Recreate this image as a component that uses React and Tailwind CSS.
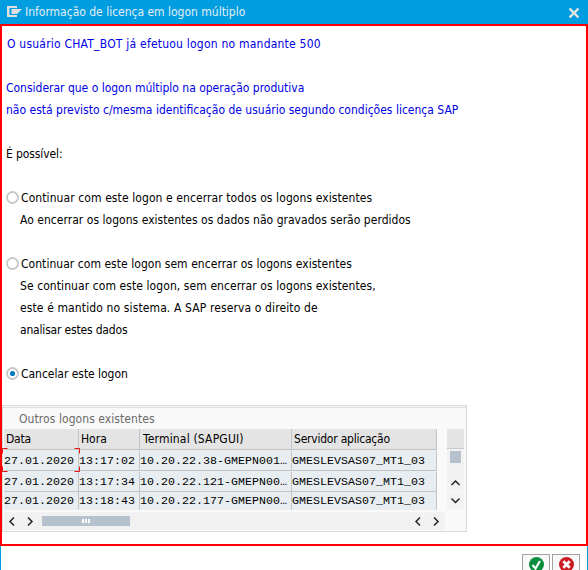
import React from "react";

const UI = "font-['DejaVu_Sans_Condensed','DejaVu_Sans',sans-serif] [font-stretch:condensed]";

const rows = [
  { data: "27.01.2020", hora: "13:17:02", terminal: "10.20.22.38-GMEPN001", servidor: "GMESLEVSAS07_MT1_03" },
  { data: "27.01.2020", hora: "13:17:34", terminal: "10.20.22.121-GMEPN00", servidor: "GMESLEVSAS07_MT1_03" },
  { data: "27.01.2020", hora: "13:18:43", terminal: "10.20.22.177-GMEPN00", servidor: "GMESLEVSAS07_MT1_03" },
];

function Line({ children, className = "" }) {
  return (
    <div className="flex h-[22px] items-center">
      <span className={className}>{children}</span>
    </div>
  );
}

function Radio({ label, checked, className = "" }) {
  return (
    <label className="flex h-[22px] items-center pl-1">
      <svg className="mr-[2px] mb-[2px] h-[13px] w-[13px] shrink-0" viewBox="0 0 13 13">
        <circle cx="6.5" cy="6.5" r="5.5" fill="#fff" stroke="#c8c8c8" strokeWidth="1.9" />
        {checked && <circle cx="6.5" cy="6.5" r="2.6" fill="#007cc0" />}
      </svg>
      <span className={className}>{label}</span>
    </label>
  );
}

const arrows = {
  left: "M7 1.5 3 5.5l4 4",
  right: "M3 1.5l4 4-4 4",
  up: "M1.5 8l4-4 4 4",
  down: "M1.5 3.5l4 4 4-4",
};

function ArrowButton({ dir }) {
  return (
    <div className="flex h-[17px] w-[17px] shrink-0 items-center justify-center bg-[#f2f2f2]">
      <svg className="h-[11px] w-[11px]" viewBox="0 0 11 11" fill="none" stroke="#222" strokeWidth="1.5">
        <path d={arrows[dir]} />
      </svg>
    </div>
  );
}

function Cell({ children, className = "" }) {
  return (
    <div className={"flex shrink-0 items-center overflow-hidden border-r border-[#c4c4c4] whitespace-pre " + className}>
      {children}
    </div>
  );
}

function LogonTable() {
  return (
    <div className="relative w-[433px] shrink-0">
      <div className="flex h-[21px] border-b border-[#c4c4c4] bg-[#e4e4e4]">
        <Cell className="w-[75px] pl-[2px] tracking-[-0.2px]">Data</Cell>
        <Cell className="w-[61px] pl-[2px]">Hora</Cell>
        <Cell className="w-[152px] pl-[3px] tracking-[0.18px]">Terminal (SAPGUI)</Cell>
        <Cell className="w-[145px] pl-[2px] tracking-[-0.22px]">Servidor aplicação</Cell>
      </div>
      <div className="h-[60px] overflow-hidden bg-[#e8edf1] font-['Liberation_Mono',monospace] text-[11.6px] tracking-[0.04px]">
        {rows.map((r) => (
          <div key={r.hora} className="flex h-[21px] border-b border-[#c4c4c4] pt-px last:h-[18px] last:border-b-0 last:pt-0">
            <Cell className="w-[75px]">{r.data}</Cell>
            <Cell className="w-[61px]">{r.hora}</Cell>
            <Cell className="w-[152px]">{r.terminal}…</Cell>
            <Cell className="w-[145px]">{r.servidor}</Cell>
          </div>
        ))}
      </div>
      <svg className="absolute top-[19px] left-[-2px] h-6 w-[78px]" viewBox="0 0 78 24" fill="none" stroke="#e01018">
        <path d="M.5 5.5v-5h5M72.5.5h5v5M.5 18.5v5h5M72.5 23.5h5v-5" />
      </svg>
    </div>
  );
}

export default function App() {
  return (
    <div className={"flex h-[570px] w-[588px] flex-col overflow-hidden bg-white text-[12px] leading-[16px] whitespace-nowrap text-black " + UI}>
      <header className="flex h-6 shrink-0 items-center bg-[#009de0] text-[#e2eef4]">
        <svg className="ml-[7px] h-[12px] w-[15px]" viewBox="0 0 15 12" fill="#e0e0e0">
          <path d="M0 0h10v2H2.500v7H10v2H0z" />
          <path d="M4.500 3H15l-3.500 3.500L10 8H4.500z" />
        </svg>
        <span className="ml-[3px] tracking-[-0.01px]">Informação de licença em logon múltiplo</span>
        <svg className="mt-[2px] mr-[9px] ml-auto h-[10px] w-[10px]" viewBox="0 0 10 10" stroke="#e2e2e2" strokeWidth="2.4">
          <path d="M.5.5l9 9M9.5.5l-9 9" />
        </svg>
      </header>

      <main className="h-[522px] shrink-0 border-2 border-[#ff0000] pt-[7px]">
        <div className="pl-1 text-[#0000e6]">
          <Line className="pl-px tracking-[0.22px]">O usuário CHAT_BOT já efetuou logon no mandante 500</Line>
          <Line />
          <Line className="tracking-[-0.01px]">Considerar que o logon múltiplo na operação produtiva</Line>
          <Line>não está previsto c/mesma identificação de usuário segundo condições licença SAP</Line>
        </div>
        <div className="pt-[22px] pl-1">
          <Line className="tracking-[-0.1px]">É possível:</Line>
        </div>
        <div className="pt-[22px]">
          <Radio className="tracking-[0.09px]" label="Continuar com este logon e encerrar todos os logons existentes" />
          <div className="pl-[18px]">
            <Line className="tracking-[0.03px]">Ao encerrar os logons existentes os dados não gravados serão perdidos</Line>
          </div>
        </div>
        <div className="pt-[22px]">
          <Radio className="tracking-[0.04px]" label="Continuar com este logon sem encerrar os logons existentes" />
          <div className="pl-[18px]">
            <Line className="tracking-[0.08px]">Se continuar com este logon, sem encerrar os logons existentes,</Line>
            <Line className="tracking-[0.12px]">este é mantido no sistema. A SAP reserva o direito de</Line>
            <Line className="tracking-[-0.18px]">analisar estes dados</Line>
          </div>
        </div>
        <div className="pt-[22px]">
          <Radio className="tracking-[-0.04px]" checked label="Cancelar este logon" />
        </div>

        <section className="mt-5 h-[127px] w-[465px] border border-[#d9d9d9] bg-[#f9f9f9]">
          <div className="mt-px flex h-[22px] items-center border-t border-[#dedede] pl-4 tracking-[0.07px] text-[#6a6a6a]">
            Outros logons existentes
          </div>
          <div className="flex h-[81px] pl-px">
            <LogonTable />
            <div className="ml-[10px] flex w-[17px] flex-col">
              <div className="h-5 border-b border-[#c8c8c8] bg-[#e4e4e4]" />
              <div className="h-[25px] bg-[#f2f2f2] pt-[2px] pl-[3px]">
                <div className="h-3 w-[11px] bg-[#b5c1cc]" />
              </div>
              <ArrowButton dir="up" />
              <div className="h-px" />
              <ArrowButton dir="down" />
            </div>
          </div>
          <div className="mt-[2px] ml-px flex h-[18px] w-[441px] items-center gap-px bg-[#f1f1f1]">
            <ArrowButton dir="left" />
            <ArrowButton dir="right" />
            <div className="ml-[2px] flex h-[10px] w-[88px] items-center justify-center gap-px bg-[#b5c1cc]">
              <i className="h-1 w-[2px] bg-white" />
              <i className="h-1 w-[2px] bg-white" />
              <i className="h-1 w-[2px] bg-white" />
            </div>
            <div className="flex-1" />
            <ArrowButton dir="left" />
            <ArrowButton dir="right" />
          </div>
        </section>
      </main>

      <footer className="flex h-6 shrink-0 justify-end gap-[2px] overflow-hidden border-x border-[#009de0] pt-2 pr-[7px]">
        <div className="flex h-[24px] w-7 justify-center border border-[#a2a2a2] bg-[#f8f8f8] pt-[2px]">
          <svg className="h-[15px] w-[15px]" viewBox="0 0 15 15">
            <circle cx="7.5" cy="7.5" r="7.5" fill="#0a8f3f" />
            <path d="M3.5 8l3 3.5 4.5-7.5" fill="none" stroke="#fff" strokeWidth="2.2" />
          </svg>
        </div>
        <div className="flex h-[24px] w-7 justify-center border border-[#a2a2a2] bg-[#f8f8f8] pt-[2px]">
          <svg className="h-[15px] w-[15px]" viewBox="0 0 15 15">
            <circle cx="7.5" cy="7.5" r="7.5" fill="#cc1a22" />
            <path d="M4.3 4.3l6.4 6.4M10.7 4.3l-6.4 6.4" stroke="#fff" strokeWidth="2.8" />
          </svg>
        </div>
      </footer>
    </div>
  );
}
